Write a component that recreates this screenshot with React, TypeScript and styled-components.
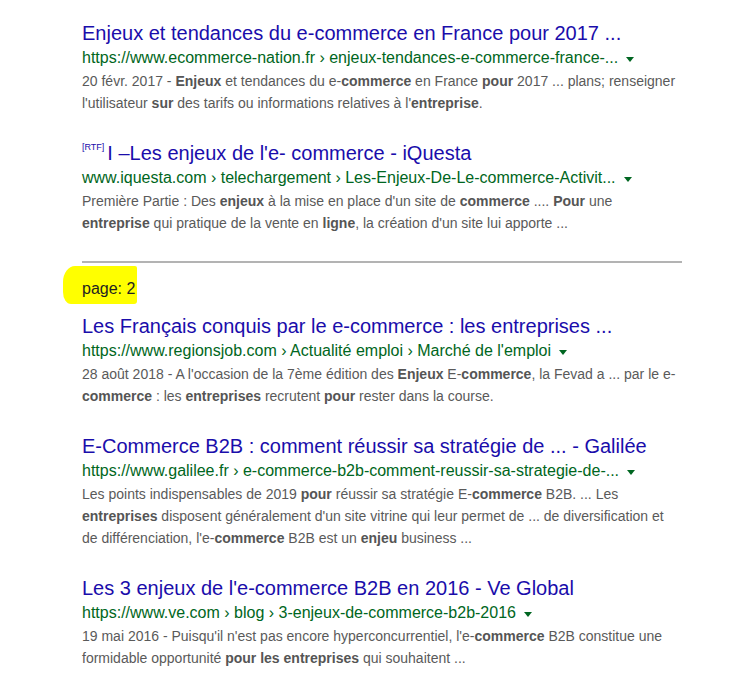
import React from 'react'
import styled, { createGlobalStyle } from 'styled-components'

const GlobalStyle = createGlobalStyle`
  body {
    margin: 0;
    background: #ffffff;
    font-family: "Liberation Sans", Arial, sans-serif;
  }
`

const Page = styled.div`
  width: 746px;
  padding: 20px 0 0 82px;
  box-sizing: border-box;
`

const Result = styled.div`
  width: 600px;
  margin-bottom: 26px;
`

const Title = styled.a`
  display: block;
  font-size: 20px;
  line-height: 26px;
  color: #1a0dab;
  text-decoration: none;
  white-space: nowrap;
`

const FileType = styled.span`
  font-size: 9px;
  line-height: 15px;
  vertical-align: top;
  margin-right: 3px;
`

const UrlLine = styled.div`
  display: flex;
  align-items: center;
  font-size: 16px;
  line-height: 24px;
  color: #006621;
  white-space: nowrap;
`

const Caret = styled.span`
  width: 0;
  height: 0;
  margin-left: 8px;
  margin-top: 2px;
  border-left: 4px solid transparent;
  border-right: 4px solid transparent;
  border-top: 5px solid #006621;
`

const Snippet = styled.div`
  font-size: 14px;
  line-height: 22px;
  color: #5a5a5a;

  b {
    color: #555555;
  }
`

const Divider = styled.hr`
  width: 600px;
  margin: 27px 0 0 0;
  border: none;
  border-top: 2px solid #b3b3b3;
`

const PageLabel = styled.div`
  display: flex;
  margin: 3px 0 9px 0;
  font-size: 16px;
  line-height: 24px;
  color: #222;
`

const Highlight = styled.span`
  background: #ffff00;
  padding: 11px 2px 3px 19px;
  margin-left: -19px;
  border-radius: 12px 2px 3px 8px / 16px 2px 3px 12px;
`

const App = () => {
  return (
    <>
      <GlobalStyle />
      <Page>
        <Result>
          <Title>Enjeux et tendances du e-commerce en France pour 2017 ...</Title>
          <UrlLine>
            https://www.ecommerce-nation.fr › enjeux-tendances-e-commerce-france-...
            <Caret />
          </UrlLine>
          <Snippet>
            20 févr. 2017 - <b>Enjeux</b> et tendances du e-<b>commerce</b> en France <b>pour</b> 2017 ... plans; renseigner
            l'utilisateur <b>sur</b> des tarifs ou informations relatives à l'<b>entreprise</b>.
          </Snippet>
        </Result>

        <Result>
          <Title>
            <FileType>[RTF]</FileType>I –Les enjeux de l'e- commerce - iQuesta
          </Title>
          <UrlLine>
            www.iquesta.com › telechargement › Les-Enjeux-De-Le-commerce-Activit...
            <Caret />
          </UrlLine>
          <Snippet>
            Première Partie : Des <b>enjeux</b> à la mise en place d'un site de <b>commerce</b> .... <b>Pour</b> une{' '}
            <b>entreprise</b> qui pratique de la vente en <b>ligne</b>, la création d'un site lui apporte ...
          </Snippet>
        </Result>

        <Divider />
        <PageLabel>
          <Highlight>page: 2</Highlight>
        </PageLabel>

        <Result>
          <Title>Les Français conquis par le e-commerce : les entreprises ...</Title>
          <UrlLine>
            https://www.regionsjob.com › Actualité emploi › Marché de l'emploi
            <Caret />
          </UrlLine>
          <Snippet>
            28 août 2018 - A l'occasion de la 7ème édition des <b>Enjeux</b> E-<b>commerce</b>, la Fevad a ... par le e-
            <b>commerce</b> : les <b>entreprises</b> recrutent <b>pour</b> rester dans la course.
          </Snippet>
        </Result>

        <Result>
          <Title>E-Commerce B2B : comment réussir sa stratégie de ... - Galilée</Title>
          <UrlLine>
            https://www.galilee.fr › e-commerce-b2b-comment-reussir-sa-strategie-de-...
            <Caret />
          </UrlLine>
          <Snippet>
            Les points indispensables de 2019 <b>pour</b> réussir sa stratégie E-<b>commerce</b> B2B. ... Les{' '}
            <b>entreprises</b> disposent généralement d'un site vitrine qui leur permet de ... de diversification et
            de différenciation, l'e-<b>commerce</b> B2B est un <b>enjeu</b> business ...
          </Snippet>
        </Result>

        <Result>
          <Title>Les 3 enjeux de l'e-commerce B2B en 2016 - Ve Global</Title>
          <UrlLine>
            https://www.ve.com › blog › 3-enjeux-de-commerce-b2b-2016
            <Caret />
          </UrlLine>
          <Snippet>
            19 mai 2016 - Puisqu'il n'est pas encore hyperconcurrentiel, l'e-<b>commerce</b> B2B constitue une
            formidable opportunité <b>pour les entreprises</b> qui souhaitent ...
          </Snippet>
        </Result>
      </Page>
    </>
  )
}

export default App
